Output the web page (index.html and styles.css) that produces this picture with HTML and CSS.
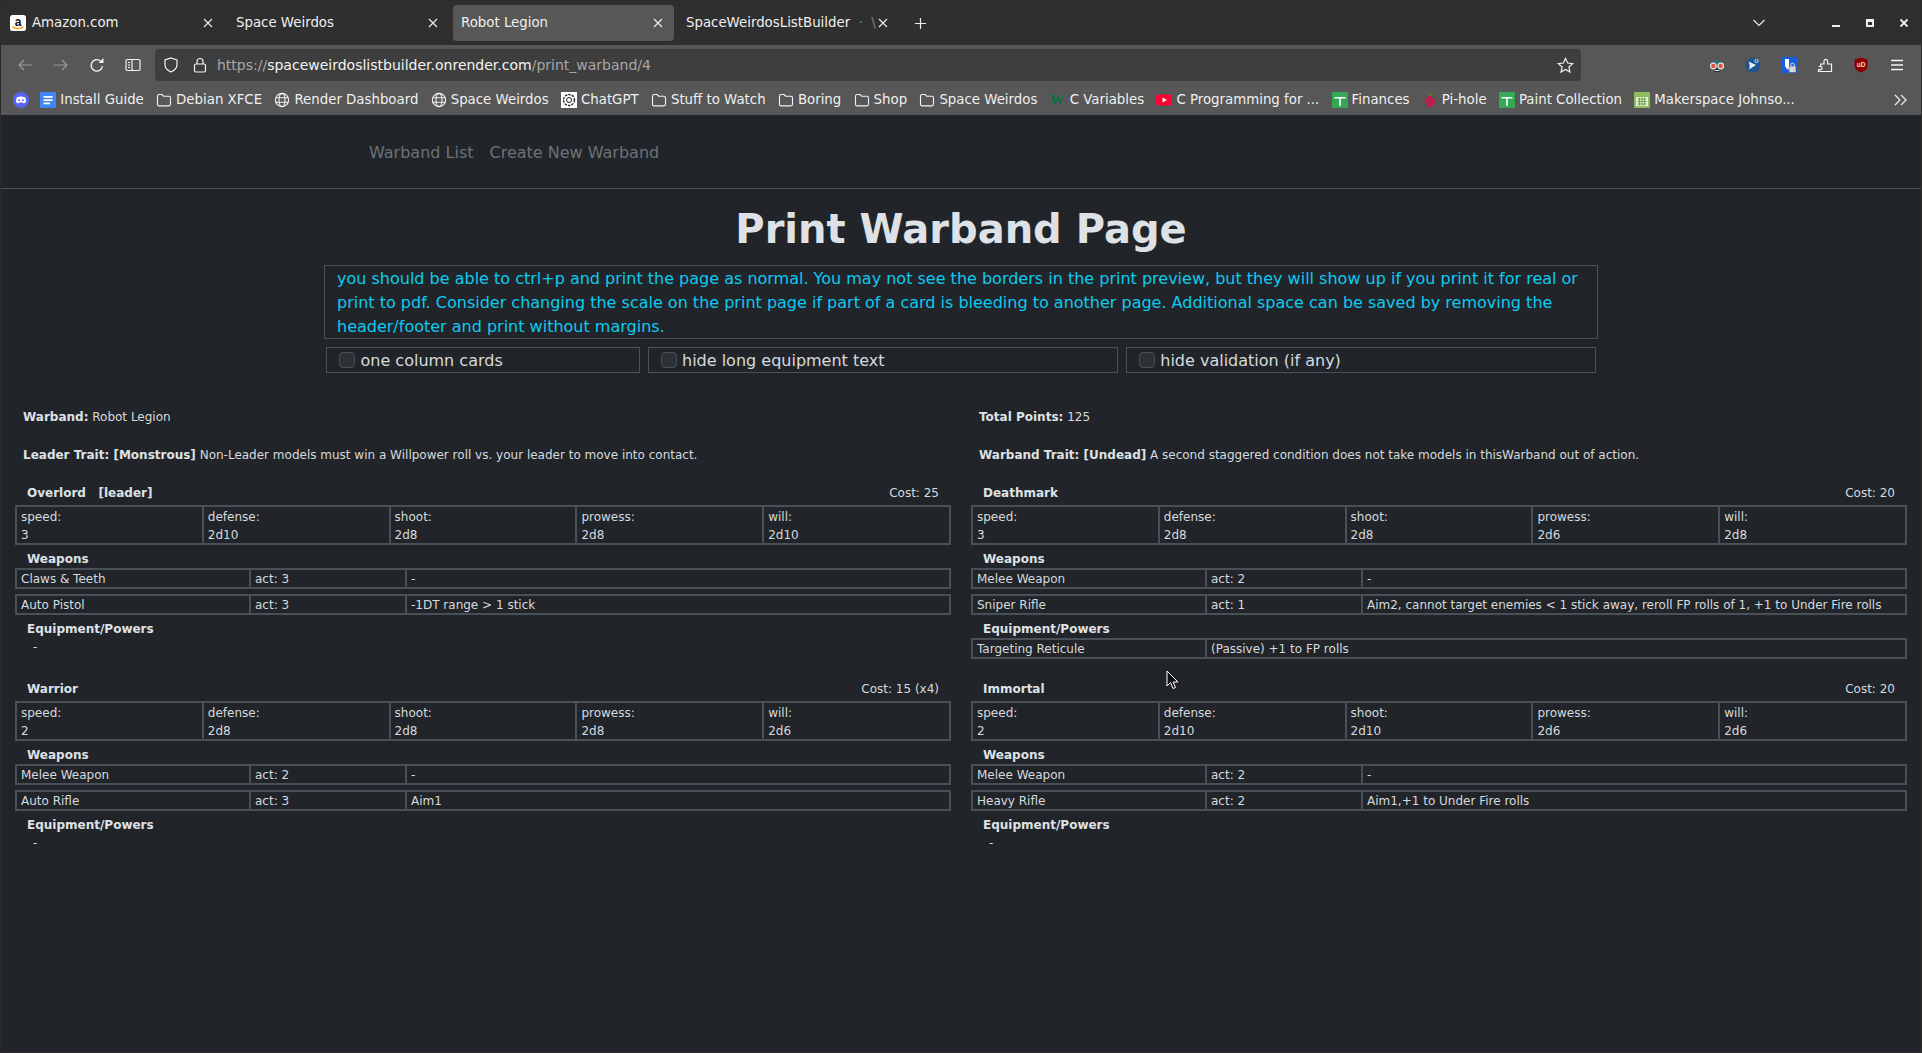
FILE: index.html
```html
<!DOCTYPE html>
<html lang="en">
<head>
    <meta charset="UTF-8">
    <title>Robot Legion</title>
    <link rel="stylesheet" href="styles.css">
</head>
<body>
    <svg class="sprites" width="0" height="0">
        <symbol id="i-folder" viewBox="0 0 16 16"><path d="M1.500 4.200c0-1 .6-1.700 1.600-1.700h3l1.600 1.700h5.200c1 0 1.600.6 1.600 1.600v6.500c0 1-.6 1.600-1.600 1.600H3.100c-1 0-1.600-.6-1.600-1.600z" fill="none" stroke="currentColor" stroke-width="1.100"/></symbol>
        <symbol id="i-globe" viewBox="0 0 16 16"><g fill="none" stroke="currentColor" stroke-width="1.100"><circle cx="8" cy="8" r="6.600"/><ellipse cx="8" cy="8" rx="3" ry="6.600"/><path d="M1.600 5.800h12.800M1.600 10.200h12.800"/></g></symbol>
        <symbol id="i-sheet" viewBox="0 0 16 16"><rect x="0" y="0" width="16" height="16" rx="1" fill="#34a853"/><path d="M2.500 5h11v1.600H8.800V14H7.200V6.600H2.500z" fill="#fff"/></symbol>
        <symbol id="i-close" viewBox="0 0 10 10"><path d="M1 1l8 8M9 1l-8 8" stroke="currentColor" stroke-width="1.100" fill="none"/></symbol>
    </svg>

    <header class="browser">
        <div class="tabbar">
            <div class="tab">
                <svg class="fav" viewBox="0 0 16 16"><rect width="16" height="16" rx="2.500" fill="#fff"/><text x="8" y="10.500" font-size="12" font-weight="700" text-anchor="middle" fill="#111" font-family="Liberation Sans">a</text><path d="M2.500 11.500c3 2.600 7.500 2.800 11 .4" stroke="#f90" stroke-width="1.500" fill="none"/></svg>
                <span class="tab-title">Amazon.com</span>
                <svg class="tab-x"><use href="#i-close"/></svg>
            </div>
            <div class="tab">
                <span class="tab-title">Space Weirdos</span>
                <svg class="tab-x"><use href="#i-close"/></svg>
            </div>
            <div class="tab active">
                <span class="tab-title">Robot Legion</span>
                <svg class="tab-x"><use href="#i-close"/></svg>
            </div>
            <div class="tab">
                <span class="tab-title">SpaceWeirdosListBuilder <span class="tab-tail">&nbsp;·&nbsp;&nbsp;\</span></span>
                <svg class="tab-x"><use href="#i-close"/></svg>
            </div>
            <svg class="new-tab" viewBox="0 0 14 14"><path d="M7 1v12M1 7h12" stroke="#eee" stroke-width="1.300"/></svg>
            <div class="win-controls">
                <svg class="chevron" viewBox="0 0 14 8"><path d="M1.500 1L7 6.500 12.500 1" stroke="#e8e8e8" stroke-width="1.200" fill="none"/></svg>
                <span class="win-btn"><svg viewBox="0 0 10 10"><rect x="1" y="7" width="8" height="2" fill="#eee"/></svg></span>
                <span class="win-btn"><svg viewBox="0 0 10 10"><path fill-rule="evenodd" d="M1 1h8v8H1zM3 4v3h4V4z" fill="#eee"/></svg></span>
                <span class="win-btn"><svg viewBox="0 0 10 10"><path d="M1.500 1.500l7 7M8.500 1.500l-7 7" stroke="#eee" stroke-width="1.800"/></svg></span>
            </div>
        </div>

        <div class="toolbar">
            <svg class="tool dim" viewBox="0 0 16 16"><path d="M15 8H2M7 3L2 8l5 5" fill="none" stroke="currentColor" stroke-width="1.200"/></svg>
            <svg class="tool dim" viewBox="0 0 16 16"><path d="M1 8h13M9 3l5 5-5 5" fill="none" stroke="currentColor" stroke-width="1.200"/></svg>
            <svg class="tool" viewBox="0 0 16 16"><path d="M13.500 9a5.700 5.700 0 1 1-2-5" fill="none" stroke="currentColor" stroke-width="1.300"/><path d="M14.500 1v5h-5z" fill="currentColor"/></svg>
            <svg class="tool" viewBox="0 0 16 16"><rect x="1" y="2.500" width="14" height="11" rx="1.500" fill="none" stroke="currentColor" stroke-width="1.200"/><path d="M7 2.500v11M3 5.500h2M3 8h2M3 10.500h2" stroke="currentColor" stroke-width="1.200"/></svg>
            <div class="urlbar">
                <svg class="url-icon" viewBox="0 0 16 16"><path d="M8 1l6 2v4.500c0 3.700-2.500 6-6 7.500-3.500-1.500-6-3.800-6-7.500V3z" fill="none" stroke="currentColor" stroke-width="1.200"/></svg>
                <svg class="url-icon" viewBox="0 0 16 16"><rect x="2.500" y="7" width="11" height="8" rx="1.500" fill="none" stroke="currentColor" stroke-width="1.200"/><path d="M5 7V4.500a3 3 0 0 1 6 0V7" fill="none" stroke="currentColor" stroke-width="1.200"/></svg>
                <span class="url"><span class="url-dim">https://</span>spaceweirdoslistbuilder.onrender.com<span class="url-dim">/print_warband/4</span></span>
                <svg class="url-star" viewBox="0 0 16 16"><path d="M8 1.300l2 4.400 4.800.5-3.600 3.200 1 4.700L8 11.700l-4.200 2.400 1-4.700L1.200 6.200 6 5.700z" fill="none" stroke="currentColor" stroke-width="1.100"/></svg>
            </div>
            <div class="extensions">
                <svg viewBox="0 0 16 16"><path d="M2 9a6 6 0 0 1 12 0z" fill="#2d6f7d"/><path d="M4 11h8l-1 4H5z" fill="#30343a"/><path d="M5.500 13.500h5" stroke="#ddd"/><circle cx="4.300" cy="9" r="2.800" fill="#e0533a" stroke="#e6e6e6" stroke-width="1.200"/><circle cx="11.700" cy="9" r="2.800" fill="#e0533a" stroke="#e6e6e6" stroke-width="1.200"/></svg>
                <svg viewBox="0 0 16 16"><circle cx="8" cy="8" r="7.500" fill="#1d568f"/><path d="M3.500 4.500l7.500 3.500-7 4.500c1-2.800 1-5.200-.5-8z" fill="#eef3f8"/><circle cx="11.500" cy="4" r="1.600" fill="none" stroke="#cfe0f0"/></svg>
                <svg viewBox="0 0 16 16"><rect width="16" height="16" fill="#175ddc"/><path d="M4 2h8v6c0 2.500-2 4-4 5-2-1-4-2.500-4-5z" fill="#fff"/><path d="M8 2h4v6c0 2.500-2 4-4 5z" fill="#175ddc"/><rect x="8" y="9" width="7" height="6.500" rx="1" fill="#d8d8d8" stroke="#555" stroke-width=".6"/><path d="M9.800 9V7.800a1.700 1.700 0 0 1 3.400 0V9" fill="none" stroke="#e8e8e8"/></svg>
                <svg viewBox="0 0 16 16"><path d="M1.500 9.500h2.200V7H7V4.200a1.800 1.800 0 0 1 3.600 0V7h3.900v7.500h-13v-1.800h2a1.600 1.600 0 0 0 0-3.200z" fill="none" stroke="#f4f4f4" stroke-width="1.200"/></svg>
                <svg viewBox="0 0 16 16"><path d="M8 .5l6.500 2v6c0 3.500-3 5.700-6.500 7-3.500-1.300-6.500-3.500-6.500-7v-6z" fill="#800"/><text x="8" y="10" font-size="6.500" font-weight="700" text-anchor="middle" fill="#f2dede" font-family="Liberation Sans">uD</text></svg>
                <svg viewBox="0 0 16 16"><path d="M2 3.500h12M2 8h12M2 12.500h12" stroke="#f4f4f4" stroke-width="1.300"/></svg>
            </div>
        </div>

        <div class="bookmarks">
            <svg class="bm-discord" viewBox="0 0 16 16"><circle cx="8" cy="8" r="8" fill="#5865f2"/><path d="M4 5.300c2.500-1 5.500-1 8 0 .8 1.700 1.100 3.400 1 5-1 .7-1.800 1-2.500 1.100l-.6-.9H6.100l-.6.900c-.7-.1-1.500-.4-2.500-1.100-.1-1.600.2-3.300 1-5z" fill="#fff"/><circle cx="6.200" cy="8.200" r="1" fill="#5865f2"/><circle cx="9.800" cy="8.200" r="1" fill="#5865f2"/></svg>
            <a class="bm"><svg viewBox="0 0 16 16"><rect width="16" height="16" rx="1" fill="#4285f4"/><path d="M3.500 4h9v1.800h-9zM3.500 7.200h9V9h-9zM3.500 10.400h6.500v1.800H3.500z" fill="#fff"/></svg>Install Guide</a>
            <a class="bm"><svg><use href="#i-folder"/></svg>Debian XFCE</a>
            <a class="bm"><svg><use href="#i-globe"/></svg>Render Dashboard</a>
            <a class="bm"><svg><use href="#i-globe"/></svg>Space Weirdos</a>
            <a class="bm"><svg viewBox="0 0 16 16"><rect width="16" height="16" fill="#fff"/><circle cx="8" cy="8" r="5.500" fill="none" stroke="#222" stroke-width="1.300" stroke-dasharray="2.500 1"/><circle cx="8" cy="8" r="2.500" fill="none" stroke="#222"/></svg>ChatGPT</a>
            <a class="bm"><svg><use href="#i-folder"/></svg>Stuff to Watch</a>
            <a class="bm"><svg><use href="#i-folder"/></svg>Boring</a>
            <a class="bm"><svg><use href="#i-folder"/></svg>Shop</a>
            <a class="bm"><svg><use href="#i-folder"/></svg>Space Weirdos</a>
            <a class="bm"><svg viewBox="0 0 16 16"><text x="7" y="13" font-size="14" font-weight="700" text-anchor="middle" fill="#04733f" font-family="Liberation Serif">W</text></svg>C Variables</a>
            <a class="bm"><svg viewBox="0 0 16 16"><rect y="2.500" width="16" height="11" rx="3" fill="#f03"/><path d="M6.500 5.500L11 8l-4.500 2.500z" fill="#fff"/></svg>C Programming for ...</a>
            <a class="bm"><svg><use href="#i-sheet"/></svg>Finances</a>
            <a class="bm"><svg viewBox="0 0 16 16"><path d="M5 0l3 3 3-3-1.500 3.500h-3z" fill="#4c9a2a"/><circle cx="8" cy="6" r="2.500" fill="#c51a4a"/><circle cx="5" cy="9" r="2.300" fill="#c51a4a"/><circle cx="11" cy="9" r="2.300" fill="#c51a4a"/><circle cx="8" cy="12.500" r="3" fill="#c51a4a"/></svg>Pi-hole</a>
            <a class="bm"><svg><use href="#i-sheet"/></svg>Paint Collection</a>
            <a class="bm"><svg viewBox="0 0 16 16"><rect width="16" height="16" rx="1" fill="#8cbc5f"/><rect x="2" y="5" width="12" height="9" fill="#e8f2dc"/><path d="M3.500 7h9M3.500 9.500h9M3.500 12h9M5.500 5.500v8M8 5.500v8M10.500 5.500v8" stroke="#6f9f48"/></svg>Makerspace Johnso...</a>
            <svg class="bm-more" viewBox="0 0 14 12"><path d="M1 1l5 5-5 5M7 1l5 5-5 5" fill="none" stroke="#f0f0f0" stroke-width="1.200"/></svg>
        </div>
    </header>

    <nav class="topnav">
        <a>Warband List</a>
        <a>Create New Warband</a>
    </nav>

    <main>
        <h1>Print Warband Page</h1>
        <div class="notice">
            <p class="alert">you should be able to ctrl+p and print the page as normal. You may not see the borders in the print preview, but they will show up if you print it for real or print to pdf. Consider changing the scale on the print page if part of a card is bleeding to another page. Additional space can be saved by removing the header/footer and print without margins.</p>
            <div class="options">
                <label class="option"><input type="checkbox">one column cards</label>
                <label class="option"><input type="checkbox">hide long equipment text</label>
                <label class="option"><input type="checkbox">hide validation (if any)</label>
            </div>
        </div>

        <section class="sheet">
            <div class="summary">
                <p><b>Warband:</b> Robot Legion</p>
                <p><b>Leader Trait: [Monstrous]</b> Non-Leader models must win a Willpower roll vs. your leader to move into contact.</p>
            </div>
            <div class="summary">
                <p><b>Total Points:</b> 125</p>
                <p><b>Warband Trait: [Undead]</b> A second staggered condition does not take models in thisWarband out of action.</p>
            </div>

            <article class="card">
                <div class="card-head"><b>Overlord &nbsp; [leader]</b><span>Cost: 25</span></div>
                <div class="stats">
                    <div>speed:<br>3</div><div>defense:<br>2d10</div><div>shoot:<br>2d8</div><div>prowess:<br>2d8</div><div>will:<br>2d10</div>
                </div>
                <h4>Weapons</h4>
                <div class="line weapon"><div>Claws &amp; Teeth</div><div>act: 3</div><div>-</div></div>
                <div class="line weapon"><div>Auto Pistol</div><div>act: 3</div><div>-1DT range &gt; 1 stick</div></div>
                <h4>Equipment/Powers</h4>
                <div class="none">-</div>
            </article>

            <article class="card">
                <div class="card-head"><b>Deathmark</b><span>Cost: 20</span></div>
                <div class="stats">
                    <div>speed:<br>3</div><div>defense:<br>2d8</div><div>shoot:<br>2d8</div><div>prowess:<br>2d6</div><div>will:<br>2d8</div>
                </div>
                <h4>Weapons</h4>
                <div class="line weapon"><div>Melee Weapon</div><div>act: 2</div><div>-</div></div>
                <div class="line weapon"><div>Sniper Rifle</div><div>act: 1</div><div>Aim2, cannot target enemies &lt; 1 stick away, reroll FP rolls of 1, +1 to Under Fire rolls</div></div>
                <h4>Equipment/Powers</h4>
                <div class="line equip"><div>Targeting Reticule</div><div>(Passive) +1 to FP rolls</div></div>
            </article>

            <article class="card">
                <div class="card-head"><b>Warrior</b><span>Cost: 15 (x4)</span></div>
                <div class="stats">
                    <div>speed:<br>2</div><div>defense:<br>2d8</div><div>shoot:<br>2d8</div><div>prowess:<br>2d8</div><div>will:<br>2d6</div>
                </div>
                <h4>Weapons</h4>
                <div class="line weapon"><div>Melee Weapon</div><div>act: 2</div><div>-</div></div>
                <div class="line weapon"><div>Auto Rifle</div><div>act: 3</div><div>Aim1</div></div>
                <h4>Equipment/Powers</h4>
                <div class="none">-</div>
            </article>

            <article class="card">
                <div class="card-head"><b>Immortal</b><span>Cost: 20</span></div>
                <div class="stats">
                    <div>speed:<br>2</div><div>defense:<br>2d10</div><div>shoot:<br>2d10</div><div>prowess:<br>2d6</div><div>will:<br>2d6</div>
                </div>
                <h4>Weapons</h4>
                <div class="line weapon"><div>Melee Weapon</div><div>act: 2</div><div>-</div></div>
                <div class="line weapon"><div>Heavy Rifle</div><div>act: 2</div><div>Aim1,+1 to Under Fire rolls</div></div>
                <h4>Equipment/Powers</h4>
                <div class="none">-</div>
            </article>
        </section>
    </main>

    <svg class="cursor" viewBox="0 0 13 20"><path d="M1 1v15l3.500-3.500 2.500 6 2.500-1-2.500-5.500h5z" fill="#111" stroke="#fff" stroke-width="1"/></svg>
</body>
</html>
```

FILE: styles.css
```css
* {
    box-sizing: border-box;
}
html, body {
    height: 100%;
}
body {
    margin: 0;
    overflow: hidden;
    background-color: #212529;
    color: #d6dade;
    font-family: "DejaVu Sans", sans-serif;
    font-size: 12px;
    line-height: 18px;
}
b, h1, h4 {
    color: #dee2e6;
}
body::after {
    content: "";
    position: fixed;
    top: 0;
    left: 0;
    right: 0;
    bottom: 0;
    border: 1px solid #2b2b2b;
    pointer-events: none;
}
.sprites {
    position: absolute;
}

/* browser chrome */
.browser {
    color: #f0f0f0;
    font-size: 13.330px;
}
.tabbar {
    display: flex;
    align-items: center;
    gap: 4px;
    height: 45px;
    padding: 5px 1px 4px 3px;
    background-color: #2f2f2f;
}
.tab {
    display: flex;
    align-items: center;
    flex: none;
    width: 221px;
    height: 36px;
    padding: 0 11px 0 8px;
    border-radius: 4px;
}
.tab.active {
    background-color: #575757;
}
.fav {
    flex: none;
    width: 16px;
    height: 16px;
    margin: 0 6px 0 -1px;
}
.tab-title {
    flex: 1;
    white-space: nowrap;
}
.tab-tail {
    opacity: 0.4;
}
.tab-x {
    flex: none;
    width: 10px;
    height: 10px;
    color: #eee;
}
.new-tab {
    flex: none;
    width: 13px;
    height: 13px;
    margin-left: 11px;
}
.win-controls {
    display: flex;
    align-items: center;
    margin-left: auto;
}
.chevron {
    width: 14px;
    height: 8px;
    margin-right: 53px;
}
.win-btn {
    display: flex;
    justify-content: center;
    width: 34px;
}
.win-btn svg {
    width: 10px;
    height: 10px;
}
.toolbar {
    display: flex;
    align-items: center;
    height: 37px;
    padding: 4px 17px 1px 17px;
    background-color: #575757;
}
.tool {
    flex: none;
    width: 16px;
    height: 16px;
    margin-right: 20px;
    color: #f4f4f4;
}
.tool.dim {
    color: #9a9a9a;
}
.urlbar {
    display: flex;
    align-items: center;
    flex: none;
    width: 1426px;
    height: 32px;
    margin-left: -6px;
    padding: 0 7px 0 8px;
    border-radius: 4px;
    background-color: #3e3e3e;
    color: #f4f4f4;
    font-size: 14px;
}
.url-icon {
    flex: none;
    width: 16px;
    height: 16px;
    margin-right: 13px;
}
.url {
    flex: 1;
    margin-left: -4px;
}
.url-dim {
    color: #a8a8a8;
}
.url-star {
    flex: none;
    width: 17px;
    height: 17px;
}
.extensions {
    display: flex;
    gap: 20px;
    margin-left: auto;
}
.extensions svg {
    width: 16px;
    height: 16px;
}
.bookmarks {
    display: flex;
    align-items: center;
    gap: 12.300px;
    height: 33px;
    padding: 3px 14px 0 13px;
    background-color: #575757;
    white-space: nowrap;
}
.bm {
    display: flex;
    align-items: center;
    gap: 4px;
}
.bm svg {
    flex: none;
    width: 16px;
    height: 16px;
    color: #f4f4f4;
}
.bm-discord {
    flex: none;
    width: 16px;
    height: 16px;
    margin-right: -1px;
}
.bm-more {
    flex: none;
    width: 14px;
    height: 12px;
    margin-left: auto;
}

/* page */
.topnav {
    display: flex;
    align-items: center;
    gap: 16px;
    height: 74px;
    padding: 3px 0 0 369px;
    border-bottom: 1px solid #495057;
    color: #6c7278;
    font-size: 16px;
}
h1 {
    margin: 16px 0 12px;
    font-size: 40px;
    line-height: 48px;
    text-align: center;
}
.notice {
    width: 1274px;
    margin: 0 auto;
    font-size: 16px;
    line-height: 24px;
}
.alert {
    height: 74px;
    margin: 0;
    padding: 1px 12px 0;
    border: 1px solid #495057;
    color: #0dcaf0;
}
.options {
    display: grid;
    grid-template-columns: 2fr 3fr 3fr;
    gap: 8px;
    margin: 8px 2px 0;
}
.option {
    display: flex;
    align-items: center;
    height: 26px;
    padding: 2px 0 0 12px;
    border: 1px solid #495057;
    line-height: 22px;
}
.option input {
    appearance: none;
    width: 16px;
    height: 16px;
    margin: 0 5.500px 2px 0;
    border: 1px solid #495057;
    border-radius: 4px;
    background-color: #2b3035;
}
.sheet {
    display: grid;
    grid-template-columns: 936px 936px;
    column-gap: 20px;
    row-gap: 21.500px;
    margin-top: 35px;
    padding-left: 15px;
}
.summary {
    padding: 0 8px;
}
.summary p {
    margin: 0 0 20px;
}
.summary p:last-child {
    margin-bottom: -1.500px;
}
.card-head {
    display: flex;
    justify-content: space-between;
    padding: 0 12px;
    margin-bottom: 3px;
}
.stats {
    display: grid;
    grid-template-columns: repeat(5, 1fr);
    gap: 2px;
    border: 2px solid #495057;
    background-color: #495057;
}
.stats div {
    height: 36px;
    padding: 1px 3px 0 4px;
    background-color: #212529;
}
h4 {
    margin: 5px 0 0;
    padding-left: 12px;
    font-size: 12px;
    line-height: 18px;
}
.line {
    display: grid;
    gap: 2px;
    height: 21px;
    border: 2px solid #495057;
    background-color: #495057;
}
.line div {
    height: 17px;
    padding: 0 3px 0 4px;
    background-color: #212529;
}
.line + .line {
    margin-top: 4.500px;
}
.weapon {
    grid-template-columns: 232px 154px 1fr;
}
.equip {
    grid-template-columns: 232px 1fr;
}
.none {
    padding-left: 18px;
}
.cursor {
    position: absolute;
    top: 670px;
    left: 1166px;
    width: 13px;
    height: 20px;
}
```
